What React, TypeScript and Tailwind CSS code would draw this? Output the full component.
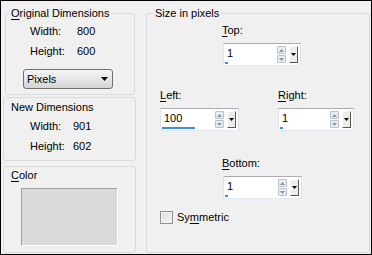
import React from 'react';

const U = ({ children }: { children: React.ReactNode }) => (
  <span className="underline decoration-1 underline-offset-[2px]">{children}</span>
);

const Arrow = ({ down, color }: { down?: boolean; color: string }) => (
  <svg width="5" height="3" viewBox="0 0 5 3" className="block">
    <path d={down ? 'M0 0H5L2.5 3Z' : 'M0 3H5L2.5 0Z'} fill={color} />
  </svg>
);

interface SpinnerProps {
  value: number;
  width: string;
}

const Spinner = ({ value, width }: SpinnerProps) => {
  const bar = Math.max(3, Math.round(value * 0.33));
  return (
    <div
      className={`relative flex h-[23px] items-center border border-[#abadb3] border-r-[#dbdfe6] border-b-[#e3e9ef] border-l-[#e2e3ea] bg-white ${width}`}
    >
      <span className="flex-1 pl-[3px] leading-none -mt-[2px]">{value}</span>
      <div className="flex h-[17px] w-[9px] flex-col gap-px">
        <div className="flex flex-1 items-center justify-center rounded-[1px] border border-[#b9c1ca] bg-[#e9edf2]">
          <Arrow color="#8a97a6" />
        </div>
        <div className="flex flex-1 items-center justify-center rounded-[1px] border border-[#b9c1ca] bg-[#e9edf2]">
          <Arrow down color="#8a97a6" />
        </div>
      </div>
      <div className="ml-[3px] mr-[2px] flex h-[17px] w-[9px] items-center justify-center border border-t-white border-l-white border-r-[#5a5a5a] border-b-[#5a5a5a] bg-[#ececec]">
        <Arrow down color="#000" />
      </div>
      {/* value gauge */}
      <div className="absolute bottom-[1px] left-[1px] h-[2px] bg-[#3e8ede]" style={{ width: bar }} />
    </div>
  );
};

const Pair = ({ label, value, cols }: { label: string; value: number; cols: string }) => (
  <div className={`grid h-[20px] items-center ${cols}`}>
    <span>{label}</span>
    <span>{value}</span>
  </div>
);

export default function App() {
  return (
    <div className="flex h-[255px] w-[372px] border border-black bg-[#f0f0f0] text-[11px] leading-[13px] text-black font-['Liberation_Sans',Arial,sans-serif]">
      {/* left column */}
      <div className="ml-[2px] flex w-[133px] flex-col">
        <div className="mt-[12px] ml-[2px] w-[130px] rounded-[3px] border border-[#d5dbdf] pb-[5px]">
          <div className="-mt-[7px] ml-[3px] w-fit bg-[#f0f0f0] px-[2px]">
            <U>O</U>riginal Dimensions
          </div>
          <div className="mt-[1px] ml-[24px]">
            <Pair label="Width:" value={800} cols="grid-cols-[47px_auto]" />
            <Pair label="Height:" value={600} cols="grid-cols-[47px_auto]" />
          </div>
          <div className="mt-[8px] ml-[17px] flex h-[20px] w-[90px] items-center justify-between rounded-[3px] border border-[#707070] bg-linear-to-b from-[#f4f4f4] via-[#e6e6e6] to-[#d4d4d4] pl-[3px] pr-[4px]">
            <span>Pixels</span>
            <svg width="7" height="4" viewBox="0 0 7 4">
              <path d="M0 0H7L3.5 4Z" fill="#000" />
            </svg>
          </div>
        </div>

        <div className="mt-[2px] rounded-[3px] border border-[#dadada] pt-[3px] pb-[4px]">
          <div className="ml-[7px]">New Dimensions</div>
          <div className="mt-[2px] ml-[26px]">
            <Pair label="Width:" value={901} cols="grid-cols-[43px_auto]" />
            <Pair label="Height:" value={602} cols="grid-cols-[43px_auto]" />
          </div>
        </div>

        <div className="mt-[5px] rounded-[3px] border border-[#dadada] pt-[2px] pb-[6px]">
          <div className="ml-[7px]">
            <U>C</U>olor
          </div>
          <div className="mt-[6px] ml-[17px] h-[58px] w-[97px] border border-t-[#a0a0a0] border-l-[#a0a0a0] border-r-white border-b-white bg-[#d9dad9]" />
        </div>
      </div>

      {/* size in pixels */}
      <div className="mt-[12px] ml-[10px] h-[240px] w-[224px] rounded-[3px] border border-[#d5dbdf]">
        <div className="-mt-[7px] ml-[6px] w-fit bg-[#f0f0f0] px-[2px]">Size in pixels</div>

        <div className="ml-[75px] mt-[4px] flex flex-col items-start">
          <span>
            <U>T</U>op:
          </span>
          <div className="mt-[6px] ml-[1px]">
            <Spinner value={1} width="w-[78px]" />
          </div>
        </div>

        <div className="mt-[23px] ml-[13px] flex">
          <div className="flex flex-col items-start">
            <span>
              <U>L</U>eft:
            </span>
            <div className="mt-[6px]">
              <Spinner value={100} width="w-[79px]" />
            </div>
          </div>
          <div className="ml-[39px] flex flex-col items-start">
            <span>
              <U>R</U>ight:
            </span>
            <div className="mt-[6px]">
              <Spinner value={1} width="w-[76px]" />
            </div>
          </div>
        </div>

        <div className="ml-[75px] mt-[26px] flex flex-col items-start">
          <span>
            <U>B</U>ottom:
          </span>
          <div className="mt-[6px] ml-[1px]">
            <Spinner value={1} width="w-[79px]" />
          </div>
        </div>

        <label className="mt-[12px] ml-[13px] flex h-[13px] items-center gap-[4px]">
          <span className="h-[13px] w-[13px] border border-[#8f8f8f] bg-linear-to-br from-[#dcdcdc] to-[#f7f7f7] shadow-[inset_0_0_0_1px_#f4f4f4]" />
          <span>
            Sy<U>m</U>metric
          </span>
        </label>
      </div>
    </div>
  );
}
